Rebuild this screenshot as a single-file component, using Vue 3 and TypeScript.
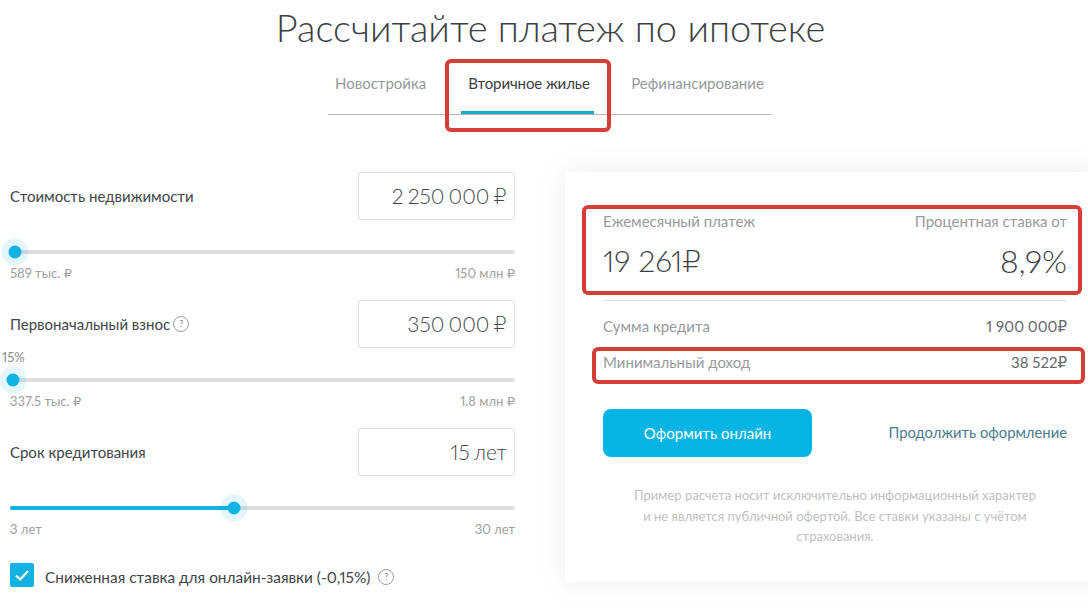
<script setup lang="ts">
interface Field {
  label: string
  value: string
  min: string
  max: string
  pos: number
  fill: number
  help?: boolean
  note?: string
}
const tabs = ['Новостройка', 'Вторичное жилье', 'Рефинансирование']
const fields: Field[] = [
  { label: 'Стоимость недвижимости', value: '2 250 000 ₽', min: '589 тыс. ₽', max: '150 млн ₽', pos: 5, fill: 0 },
  { label: 'Первоначальный взнос', value: '350 000 ₽', min: '337.5 тыс. ₽', max: '1.8 млн ₽', pos: 3, fill: 0, help: true, note: '15%' },
  { label: 'Срок кредитования', value: '15 лет', min: '3 лет', max: '30 лет', pos: 224, fill: 224 }
]
</script>

<template>
  <div class="page">
    <h1 class="title">Рассчитайте платеж по ипотеке</h1>
    <nav class="tabs">
      <span v-for="(t, i) in tabs" :key="t" class="tab" :class="{ active: i === 1 }">{{ t }}</span>
    </nav>
    <main class="content">
      <section class="form">
        <div v-for="f in fields" :key="f.label" class="field">
          <div class="field-top">
            <span class="label">{{ f.label }}<span v-if="f.help" class="help">?</span></span>
            <div class="input">{{ f.value }}</div>
          </div>
          <div class="slider">
            <span v-if="f.note" class="note">{{ f.note }}</span>
            <div class="fill" :style="{ width: f.fill + 'px' }"></div>
            <div class="thumb" :style="{ left: f.pos + 'px' }"></div>
          </div>
          <div class="limits"><span>{{ f.min }}</span><span>{{ f.max }}</span></div>
        </div>
        <label class="check">
          <span class="box">
            <svg width="24" height="24" viewBox="0 0 24 24"><path d="M6 12.5l4.2 4L18 8" fill="none" stroke="#fff" stroke-width="2.2" /></svg>
          </span>
          <span class="check-text">Сниженная ставка для онлайн-заявки (-0,15%)</span>
          <span class="help wide">?</span>
        </label>
      </section>
      <aside class="card">
        <div class="line muted"><span>Ежемесячный платеж</span><span>Процентная ставка от</span></div>
        <div class="line big"><span>19 261₽</span><span class="rate">8,9%</span></div>
        <div class="line row first"><span class="muted">Сумма кредита</span><span class="amount">1 900 000₽</span></div>
        <div class="line row"><span class="muted">Минимальный доход</span><span class="amount">38 522₽</span></div>
        <div class="actions">
          <button class="btn">Оформить онлайн</button>
          <a class="link">Продолжить оформление</a>
        </div>
        <p class="disclaimer">Пример расчета носит исключительно информационный характер<br />и не является публичной офертой. Все ставки указаны с учётом<br />страхования.</p>
      </aside>
    </main>
    <div class="mark mark-tab"></div>
    <div class="mark mark-pay"></div>
    <div class="mark mark-inc"></div>
  </div>
</template>

<style>
html, body { margin: 0; background: #fff; }
</style>

<style scoped>
.page {
  position: relative;
  width: 1088px;
  height: 608px;
  overflow: hidden;
  background: #fff;
  font-family: "Lato", "Open Sans", "DejaVu Sans", sans-serif;
  font-variant-numeric: proportional-nums;
  color: #3a3d42;
}
.title {
  width: 1101px;
  margin: 0;
  padding-top: 3px;
  height: 49px;
  line-height: 49px;
  text-align: center;
  font-size: 38px;
  font-weight: 300;
  color: #3c4045;
}
.tabs {
  width: 443px;
  height: 63px;
  margin-left: 328px;
  box-sizing: border-box;
  display: flex;
  border-bottom: 1px solid #b5b5b5;
  font-size: 15px;
  color: #96999e;
}
.tab {
  padding: 22px 7px 0;
  height: 40px;
  white-space: nowrap;
}
.tab:first-child { margin-right: 28px; }
.tab:last-child { margin-left: 30px; }
.tab.active {
  box-sizing: border-box;
  width: 133px;
  height: 62px;
  padding-right: 0;
  color: #3a3d42;
  border-bottom: 3px solid #12a9cf;
  letter-spacing: -0.1px;
}
.content {
  display: flex;
  margin-top: 57px;
}
.form {
  flex: none;
  width: 505px;
  margin-left: 10px;
}
.field { height: 128px; }
.field-top {
  display: flex;
  justify-content: space-between;
  align-items: center;
  height: 48px;
}
.label { font-size: 15px; color: #42454a; display: flex; align-items: center; margin-top: -1px; }
.help {
  display: inline-flex;
  align-items: center;
  justify-content: center;
  width: 14px;
  height: 14px;
  margin-left: 3px;
  border: 1px solid #9a9a9a;
  border-radius: 50%;
  font-size: 9px;
  color: #8a8a8a;
}
.input {
  width: 157px;
  height: 48px;
  box-sizing: border-box;
  border: 1px solid #dfdfdf;
  border-radius: 3px;
  text-align: right;
  padding-right: 7px;
  line-height: 46px;
  font-size: 21px;
  font-weight: 300;
  word-spacing: -1.5px;
  color: #44474c;
}
.slider {
  position: relative;
  height: 4px;
  margin-top: 30px;
  background: #dedede;
  border-radius: 2px;
}
.fill {
  position: absolute;
  left: 0;
  top: 0;
  height: 4px;
  border-radius: 2px;
  background: #12b2e2;
}
.thumb {
  position: absolute;
  top: 2px;
  width: 13px;
  height: 13px;
  transform: translate(-50%, -50%);
  border-radius: 50%;
  background: #12b2e2;
  box-shadow: 0 0 0 7px rgba(18, 178, 226, 0.12);
}
.note {
  position: absolute;
  left: -8px;
  top: -29px;
  font-size: 13px;
  color: #8d8d8d;
}
.limits {
  display: flex;
  justify-content: space-between;
  margin-top: 11px;
  font-size: 13px;
  color: #a0a0a0;
}
.check {
  display: flex;
  align-items: center;
  margin-top: 7px;
  font-size: 15.4px;
  color: #42454a;
}
.check-text { padding-top: 3px; }
.box {
  width: 24px;
  height: 24px;
  border-radius: 2px;
  background: #12b2e2;
  margin-right: 11px;
}
.wide { margin: 3px 0 0 8px; }
.card {
  flex: none;
  width: 540px;
  height: 410px;
  margin-left: 50px;
  padding: 40px 0 0 38px;
  box-sizing: border-box;
  background: #fff;
  box-shadow: 0 0 24px rgba(120, 140, 175, 0.16);
}
.card > * { width: 464px; }
.line {
  display: flex;
  justify-content: space-between;
  font-size: 15px;
}
.muted { color: #979a9e; }
.big {
  margin-top: 12px;
  height: 58px;
  font-size: 30px;
  font-weight: 300;
  line-height: 37px;
  color: #3c4045;
  border-bottom: 1px solid #dcdfe4;
}
.rate { font-size: 32px; }
.row { height: 36px; align-items: center; }
.first { margin-top: 7px; }
.amount { color: #66696e; }
.actions {
  display: flex;
  justify-content: space-between;
  align-items: center;
  margin-top: 29px;
}
.btn {
  width: 209px;
  height: 48px;
  border: 0;
  border-radius: 8px;
  background: #03b4e4;
  color: #fff;
  font: 400 15px "Lato", "Open Sans", sans-serif;
}
.link { font-size: 14.8px; color: #4a7a8e; margin-top: -2px; }
.disclaimer {
  margin: 28px 0 0;
  text-align: center;
  font-size: 13px;
  line-height: 20.5px;
  color: #bfbfbf;
}
.mark {
  position: absolute;
  box-sizing: border-box;
  border: 4px solid #d33e36;
  border-radius: 6px;
}
.mark-tab { left: 445px; top: 59px; width: 166px; height: 73px; }
.mark-pay { left: 582px; top: 205px; width: 500px; height: 90px; }
.mark-inc { left: 592px; top: 347px; width: 493px; height: 37px; }
</style>
